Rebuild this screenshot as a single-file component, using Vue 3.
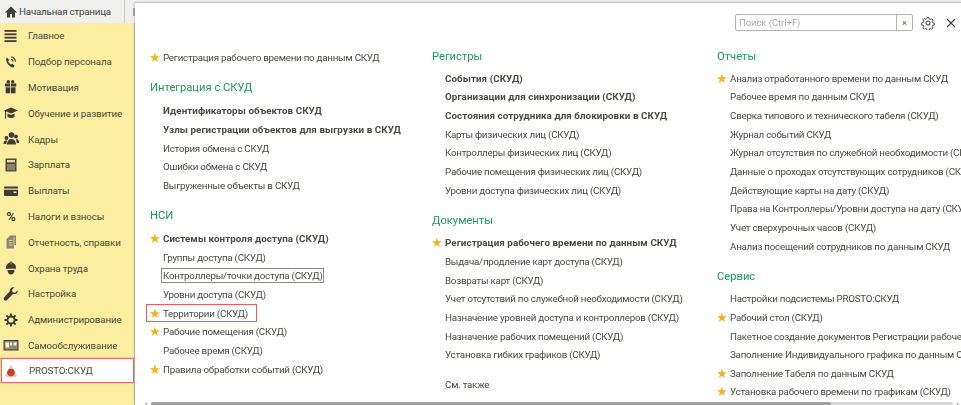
<script setup>
const menu = [
  { label: "Главное", icon: "menu" },
  { label: "Подбор персонала", icon: "phone" },
  { label: "Мотивация", icon: "gift" },
  { label: "Обучение и развитие", icon: "cap" },
  { label: "Кадры", icon: "people" },
  { label: "Зарплата", icon: "calc" },
  { label: "Выплаты", icon: "wallet" },
  { label: "Налоги и взносы", icon: "percent" },
  { label: "Отчетность, справки", icon: "docs" },
  { label: "Охрана труда", icon: "helmet" },
  { label: "Настройка", icon: "wrench" },
  { label: "Администрирование", icon: "gear" },
  { label: "Самообслуживание", icon: "badge" },
];

const columns = [
  {
    cls: "col-a",
    groups: [
      { items: [{ t: "Регистрация рабочего времени по данным СКУД", star: true }] },
      {
        title: "Интеграция с СКУД",
        items: [
          { t: "Идентификаторы объектов СКУД", bold: true },
          { t: "Узлы регистрации объектов для выгрузки в СКУД", bold: true },
          { t: "История обмена с СКУД" },
          { t: "Ошибки обмена с СКУД" },
          { t: "Выгруженные объекты в СКУД" },
        ],
      },
      {
        title: "НСИ",
        items: [
          { t: "Системы контроля доступа (СКУД)", bold: true, star: true },
          { t: "Группы доступа (СКУД)" },
          { t: "Контроллеры/точки доступа (СКУД)", focus: true },
          { t: "Уровни доступа (СКУД)" },
          { t: "Территории (СКУД)", star: true, mark: true },
          { t: "Рабочие помещения (СКУД)", star: true },
          { t: "Рабочее время (СКУД)" },
          { t: "Правила обработки событий (СКУД)", star: true },
        ],
      },
    ],
  },
  {
    cls: "col-b",
    groups: [
      {
        title: "Регистры",
        items: [
          { t: "События (СКУД)", bold: true },
          { t: "Организации для синхронизации (СКУД)", bold: true },
          { t: "Состояния сотрудника для блокировки в СКУД", bold: true },
          { t: "Карты физических лиц (СКУД)" },
          { t: "Контроллеры физических лиц (СКУД)" },
          { t: "Рабочие помещения физических лиц (СКУД)" },
          { t: "Уровни доступа физических лиц (СКУД)" },
        ],
      },
      {
        title: "Документы",
        items: [
          { t: "Регистрация рабочего времени по данным СКУД", bold: true, star: true },
          { t: "Выдача/продление карт доступа (СКУД)" },
          { t: "Возвраты карт (СКУД)" },
          { t: "Учет отсутствий по служебной необходимости (СКУД)" },
          { t: "Назначение уровней доступа и контроллеров (СКУД)" },
          { t: "Назначение рабочих помещений (СКУД)" },
          { t: "Установка гибких графиков (СКУД)" },
        ],
      },
      { items: [{ t: "См. также" }] },
    ],
  },
  {
    cls: "col-c",
    groups: [
      {
        title: "Отчеты",
        items: [
          { t: "Анализ отработанного времени по данным СКУД", star: true },
          { t: "Рабочее время по данным СКУД" },
          { t: "Сверка типового и технического табеля (СКУД)" },
          { t: "Журнал событий СКУД" },
          { t: "Журнал отсутствия по служебной необходимости (СКУД)" },
          { t: "Данные о проходах отсутствующих сотрудников (СКУД)" },
          { t: "Действующие карты на дату (СКУД)" },
          { t: "Права на Контроллеры/Уровни доступа на дату (СКУД)" },
          { t: "Учет сверхурочных часов (СКУД)" },
          { t: "Анализ посещений сотрудников по данным СКУД" },
        ],
      },
      {
        title: "Сервис",
        items: [
          { t: "Настройки подсистемы PROSTO:СКУД" },
          { t: "Рабочий стол (СКУД)", star: true },
          { t: "Пакетное создание документов Регистрации рабочего времени" },
          { t: "Заполнение Индивидуального графика по данным СКУД" },
          { t: "Заполнение Табеля по данным СКУД", star: true },
          { t: "Установка рабочего времени по графикам (СКУД)", star: true },
        ],
      },
    ],
  },
];
</script>

<template>
  <div class="page">
    <div class="topbar">
      <svg class="home" viewBox="0 0 14 14" width="14" height="14">
        <path d="M7 1.500 0.800 7.600H3v5h3V9h2v3.600h3v-5h2.200z" fill="#3f3f3f" />
      </svg>
      <span class="home-label">Начальная страница</span>
      <span class="tab-sep"></span>
      <span class="next-tab"></span>
    </div>

    <div class="main">
      <nav class="sidebar">
        <div v-for="m in menu" :key="m.label" class="nav-item">
          <span v-if="m.icon === 'percent'" class="pct">%</span>
          <svg v-else class="nav-icon" viewBox="0 0 16 16" width="16" height="16">
            <g v-if="m.icon === 'menu'" fill="#3c3c34">
              <rect x="1.500" y="2" width="12" height="1.800" />
              <rect x="1.500" y="5.400" width="12" height="1.800" />
              <rect x="1.500" y="8.800" width="12" height="1.800" />
              <rect x="1.500" y="12.200" width="12" height="1.800" />
            </g>
            <g v-else-if="m.icon === 'phone'">
              <path d="M4 3.500 6 6 5.200 7.600c.6 1.400 1.500 2.300 2.800 3l1.400-.8 2.200 2-1.200 1.800C6.800 13.400 3.200 9 3 5z" fill="#3c3c34" />
              <path d="M8 3a4.500 4.500 0 0 1 4.500 4.500M8 5.500a2 2 0 0 1 2 2" fill="none" stroke="#3c3c34" stroke-width="1.200" />
            </g>
            <g v-else-if="m.icon === 'gift'" fill="#3c3c34">
              <rect x="2" y="4.500" width="5.200" height="3" />
              <rect x="8" y="4.500" width="5.200" height="3" />
              <rect x="2.700" y="8.300" width="4.500" height="6" />
              <rect x="8" y="8.300" width="4.500" height="6" />
              <circle cx="5.300" cy="2.800" r="1.700" />
              <circle cx="9.700" cy="2.800" r="1.700" />
            </g>
            <g v-else-if="m.icon === 'cap'" fill="#3c3c34">
              <path d="M1 5.500 8 2.500l7 3-7 3z" />
              <path d="M4.500 8.500v3.500c2 1.300 5 1.300 7 0V8.500L8 10z" />
              <rect x="2" y="6" width="1.100" height="7.500" />
            </g>
            <g v-else-if="m.icon === 'people'" fill="#3c3c34">
              <circle cx="8.500" cy="4" r="2.800" />
              <circle cx="13" cy="5.500" r="1.900" />
              <circle cx="3.500" cy="7" r="1.900" />
              <path d="M4 13.500c0-3.500 1.800-5.500 4.500-5.500s4.500 2 4.500 5.500z" />
              <path d="M0.500 13c0-2.500 1-3.800 3-3.800l.5 1-.8 2.800zM13 8c2 0 3 1.500 3 3.800l-2.200.4z" />
            </g>
            <g v-else-if="m.icon === 'calc'">
              <rect x="2.500" y="1.500" width="11" height="13" fill="#4a4a42" />
              <rect x="4" y="3" width="8" height="2.300" fill="#e8dc98" />
              <path d="M5 7v6.200M7 7v6.200M9 7v6.200M11 7v6.200" stroke="#e8dc98" stroke-width=".8" />
            </g>
            <g v-else-if="m.icon === 'wallet'">
              <rect x="1" y="3.500" width="14" height="9.500" rx="1" fill="#3c3c34" />
              <rect x="1" y="5.500" width="14" height="1.200" fill="#fbeea0" />
              <rect x="10.500" y="8.500" width="3" height="1.500" fill="#fbeea0" />
            </g>
            <g v-else-if="m.icon === 'docs'">
              <path d="M7 1.500h6v9.500h-2v3.500H3.500V5z" fill="#8a8a70" />
              <path d="M6 6.500h3.500M6 8.800h3.500M6 11h3.500" stroke="#e8dc98" stroke-width=".9" />
              <path d="M11 3.500v7.500" stroke="#e8dc98" stroke-width=".8" />
            </g>
            <g v-else-if="m.icon === 'helmet'" fill="#3c3c34">
              <path d="M3 7.500a5 5 0 0 1 10 0v1.200H3z" />
              <rect x="6.800" y="1.500" width="2.400" height="3" fill="#6a6a5a" />
              <path d="M4.500 10h7c0 2.800-1.500 4.500-3.500 4.500s-3.500-1.700-3.500-4.500z" />
            </g>
            <path v-else-if="m.icon === 'wrench'" d="M14.500 4.500 12 6.800l-2.500-.6L9 3.800 11.400 1.300C8.800.6 6.500 2.400 6.800 5.300L1 11.500c-.7 1-.3 2.300.8 3 .8.300 1.600.2 2.200-.5l6-6c2.900.6 5.300-1.300 4.500-3.500z" fill="#3c3c34" />
            <g v-else-if="m.icon === 'gear'">
              <circle cx="8" cy="8" r="3.600" fill="none" stroke="#3c3c34" stroke-width="2" />
              <path d="M8 1.500v2.500M8 12v2.500M1.500 8H4M12 8h2.500M3.400 3.400 5.200 5.200M10.800 10.800l1.800 1.800M12.600 3.400l-1.800 1.800M5.200 10.800l-1.800 1.800" stroke="#3c3c34" stroke-width="1.900" />
            </g>
            <g v-else-if="m.icon === 'badge'">
              <rect x="1" y="3.500" width="14" height="9.500" fill="#8a8a70" stroke="#3c3c34" />
              <rect x="2.500" y="5.500" width="3.500" height="5" fill="#fff6c8" />
              <rect x="7" y="5.500" width="2" height="3" fill="#fff6c8" />
              <rect x="10.500" y="5.500" width="3" height="3" fill="#fff6c8" />
            </g>
          </svg>
          <span class="nav-label">{{ m.label }}</span>
        </div>
        <div class="nav-item nav-active">
          <svg class="nav-icon" viewBox="0 0 16 16" width="16" height="16">
            <path d="M8 1.500 14 13c-2 2-10 2-12 0z" fill="#d4d2cc" />
            <circle cx="8" cy="9.500" r="3.800" fill="#cf3d1c" />
          </svg>
          <span class="nav-label">PROSTO:СКУД</span>
        </div>
      </nav>

      <section class="panel">
        <div class="toolbar">
          <div class="search">
            <span class="search-text">Поиск (Ctrl+F)</span>
            <span class="search-clear">×</span>
          </div>
          <svg class="tool-gear" viewBox="0 0 16 16" width="14" height="14">
            <circle cx="8" cy="8" r="2.300" fill="none" stroke="#444" stroke-width="1.200" />
            <path d="M6.800 1h2.400l.4 2 1.500.7 1.800-1 1.600 1.700-1.100 1.800.6 1.500 2 .5v2.400l-2 .4-.6 1.500 1.100 1.800-1.600 1.600-1.800-1-1.500.6-.4 2H6.800l-.4-2-1.500-.6-1.800 1-1.600-1.700 1.100-1.700-.6-1.500-2-.4V7.700l2-.5.6-1.500-1.100-1.800 1.600-1.700 1.800 1 1.500-.7z" transform="translate(.8 .8) scale(.9)" fill="none" stroke="#444" stroke-width="1.200" />
          </svg>
          <svg class="tool-close" viewBox="0 0 10 10" width="10" height="10">
            <path d="M1 1l8 8M9 1 1 9" stroke="#444" stroke-width="1.100" />
          </svg>
        </div>

        <div class="columns">
          <div v-for="col in columns" :key="col.cls" class="col" :class="col.cls">
            <div v-for="(g, gi) in col.groups" :key="gi" class="group">
              <h3 v-if="g.title" class="group-title">{{ g.title }}</h3>
              <div v-for="it in g.items" :key="it.t" class="row">
                <span v-if="it.star" class="star">★</span>
                <span class="row-text" :class="{ bold: it.bold, focus: it.focus }">{{ it.t }}</span>
                <span v-if="it.mark" class="mark"></span>
              </div>
            </div>
          </div>
        </div>

        <div class="scrollbar">
          <span class="scroll-arrow left"></span>
          <div class="scroll-track"><span class="scroll-thumb"></span></div>
          <span class="scroll-arrow right"></span>
        </div>
      </section>
    </div>
  </div>
</template>

<style>
html,
body {
  margin: 0;
  background: #fff;
}
</style>

<style scoped>
.page {
  width: 961px;
  height: 405px;
  overflow: hidden;
  display: flex;
  flex-direction: column;
  font-family: Roboto, "Liberation Sans", Arial, sans-serif;
  color: #4a4a46;
  filter: blur(0.3px);
}

.topbar {
  height: 23px;
  flex: none;
  display: flex;
  align-items: center;
  background: #f0f0ee;
  padding-left: 4px;
  box-sizing: border-box;
  font-size: 9.800px;
  letter-spacing: -0.220px;
  color: #444;
}

.home-label {
  margin-left: 1px;
}

.tab-sep {
  width: 1px;
  height: 23px;
  margin-left: 13px;
  background: #c8c8c8;
}

.next-tab {
  width: 2px;
  height: 8px;
  margin-left: 8px;
  background: #b89ab0;
}

.main {
  flex: 1;
  display: flex;
  min-height: 0;
  position: relative;
}

.sidebar {
  width: 135px;
  flex: none;
  background: #fbeea0;
  border-right: 1px solid #c9c7ac;
  box-sizing: border-box;
}

.nav-item {
  height: 25.800px;
  display: flex;
  align-items: center;
  box-sizing: border-box;
  padding-left: 3px;
  position: relative;
  font-size: 9.800px;
  letter-spacing: -0.150px;
  color: #4f4c38;
}

.nav-icon {
  flex: none;
  width: 16px;
  height: 16px;
}

.pct {
  flex: none;
  width: 16px;
  text-align: center;
  font-size: 13px;
  font-weight: bold;
  color: #3c3c34;
}

.nav-label {
  margin-left: 9px;
  white-space: nowrap;
}

.nav-active {
  margin-left: 1px;
  width: 133px;
  height: 25px;
  padding-left: 1px;
  background: #fff;
  border: 1px solid #ea6a6a;
  box-shadow: 0 0 1px #ea6a6a;
  color: #4a4a46;
}

.nav-active .nav-label {
  margin-left: 10px;
}

.panel {
  flex: 1;
  min-width: 0;
  position: relative;
  margin-top: -21px;
  background: #fff;
  border-top: 1px solid #c8c8c8;
  box-shadow: -1px 0 2px rgba(0, 0, 0, 0.15);
  overflow: hidden;
  display: flex;
  flex-direction: column;
}

.toolbar {
  height: 25px;
  display: flex;
  align-items: flex-start;
  padding-top: 11px;
  padding-left: 600px;
  flex: none;
}

.search {
  width: 176px;
  height: 15px;
  display: flex;
  justify-content: space-between;
  border: 1px solid #b5b5b0;
  border-radius: 2px;
  font-size: 9.400px;
  line-height: 15px;
  color: #a8a8a8;
}

.search-text {
  padding-left: 3px;
}

.search-clear {
  width: 15px;
  border-left: 1px solid #b5b5b0;
  text-align: center;
  color: #555;
}

.tool-gear {
  margin: 2px 0 0 8px;
}

.tool-close {
  margin: 4px 0 0 11px;
}

.columns {
  flex: 1;
  display: flex;
  min-height: 0;
}

.col {
  flex: none;
  white-space: nowrap;
}

.col-a {
  width: 283px;
  padding: 9.500px 0 0 15px;
  box-sizing: border-box;
}

.col-b {
  width: 284px;
  box-sizing: border-box;
  padding: 7px 0 0 14px;
}

.col-c {
  width: 300px;
  box-sizing: border-box;
  padding: 7px 0 0 15px;
}

.group {
  margin-bottom: 11px;
}

.col-a .group {
  margin-bottom: 10.500px;
}

.group-title {
  margin: 0 0 3.500px;
  padding-top: 1.500px;
  font-size: 11.200px;
  line-height: 18px;
  font-weight: normal;
  color: #1f9a5a;
}

.col-a .group-title {
  margin-bottom: 4.500px;
}

.row {
  height: 18.650px;
  display: flex;
  align-items: center;
  padding-left: 13px;
  position: relative;
  font-size: 9.800px;
  letter-spacing: -0.250px;
}

.star {
  position: absolute;
  left: -1px;
  font-size: 13px;
  color: #f5b21e;
}

.bold {
  font-weight: bold;
  letter-spacing: 0.070px;
}

.focus {
  outline: 1px solid #8a8a8a;
  padding: 1px 0 1px 1px;
  margin-left: -1px;
}

.mark {
  position: absolute;
  left: -4px;
  top: 0;
  width: 109px;
  height: 16px;
  border: 1px solid #ee5a5a;
}

.scrollbar {
  position: absolute;
  left: 8px;
  right: 0;
  bottom: 0;
  height: 3px;
  display: flex;
  align-items: center;
  gap: 4px;
}

.scroll-track {
  flex: 1;
  height: 3px;
  background: #d8d8d8;
  border-radius: 2px;
}

.scroll-thumb {
  display: block;
  width: 680px;
  height: 3px;
  background: #a0a0a0;
  border-radius: 2px;
}

.scroll-arrow {
  width: 0;
  height: 0;
  border: 2px solid transparent;
}

.scroll-arrow.left {
  border-right-color: #aaa;
}

.scroll-arrow.right {
  border-left-color: #aaa;
}
</style>
